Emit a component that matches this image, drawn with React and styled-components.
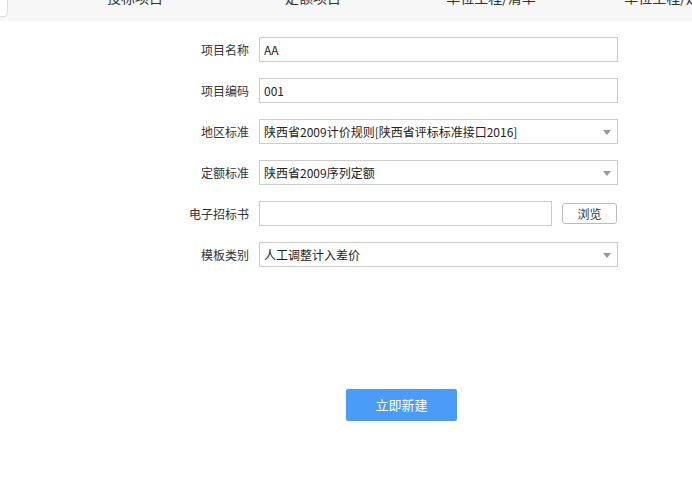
import React from 'react';
import styled, {createGlobalStyle} from 'styled-components';

const GlobalStyle = createGlobalStyle`
  html, body {
    margin: 0;
    padding: 0;
    background: #fff;
    font-family: "Noto Sans CJK SC", "Noto Sans", sans-serif;
  }
`

const tabs = ['投标项目', '定额项目', '单位工程/清单', '单位工程/定额']

const rows = [
    {label: '项目名称', value: 'AA', kind: 'input'},
    {label: '项目编码', value: '001', kind: 'input'},
    {label: '地区标准', value: '陕西省2009计价规则[陕西省评标标准接口2016]', kind: 'select'},
    {label: '定额标准', value: '陕西省2009序列定额', kind: 'select'},
    {label: '电子招标书', value: '', kind: 'file'},
    {label: '模板类别', value: '人工调整计入差价', kind: 'select'},
]

const App = () => {
    return (
        <Page>
            <GlobalStyle/>
            <TabBar>
                <Corner/>
                <Tabs>
                    {tabs.map(t => <Tab key={t}>{t}</Tab>)}
                </Tabs>
            </TabBar>
            <Form>
                {rows.map(r => (
                    <React.Fragment key={r.label}>
                        <Label>{r.label}</Label>
                        {r.kind === 'file' ? (
                            <FileRow>
                                <Field>{r.value}</Field>
                                <BrowseButton>浏览</BrowseButton>
                            </FileRow>
                        ) : (
                            <Field>
                                {r.value}
                                {r.kind === 'select' && <Arrow/>}
                            </Field>
                        )}
                    </React.Fragment>
                ))}
            </Form>
            <Footer>
                <SubmitButton>立即新建</SubmitButton>
            </Footer>
        </Page>
    );
};

export default App;

const Page = styled.div`
  width: 692px;
  height: 500px;
  overflow: hidden;
`

const TabBar = styled.div`
  position: relative;
  height: 21px;
  background: #f7f7f7;
  overflow: hidden;
`

const Corner = styled.div`
  position: absolute;
  left: -4px;
  top: -10px;
  width: 10px;
  height: 25px;
  background: #fff;
  border: 1px solid #ddd;
  border-radius: 0 0 4px 0;
`

const Tabs = styled.div`
  display: flex;
  padding-left: 46px;
  margin-top: -12px;
  white-space: nowrap;
`

const Tab = styled.div`
  flex: 0 0 178px;
  text-align: center;
  font-size: 14px;
  line-height: 18px;
  color: #333;
`

const Form = styled.div`
  display: grid;
  grid-template-columns: 80px 359px;
  column-gap: 10px;
  row-gap: 16px;
  align-items: center;
  padding: 16px 0 0 169px;
`

const Label = styled.div`
  text-align: right;
  font-size: 12px;
  color: #333;
`

const Field = styled.div`
  position: relative;
  flex: 1;
  height: 25px;
  box-sizing: border-box;
  border: 1px solid #ccc;
  padding: 0 4px;
  font-size: 12px;
  line-height: 23px;
  color: #222;
  white-space: nowrap;
`

const Arrow = styled.span`
  position: absolute;
  right: 6px;
  top: 10px;
  width: 0;
  height: 0;
  border-left: 4px solid transparent;
  border-right: 4px solid transparent;
  border-top: 5px solid #999;
`

const FileRow = styled.div`
  display: flex;
  align-items: center;
  gap: 10px;
`

const BrowseButton = styled.div`
  flex: 0 0 55px;
  height: 21px;
  box-sizing: border-box;
  border: 1px solid #bbb;
  border-radius: 3px;
  text-align: center;
  font-size: 12px;
  line-height: 19px;
  color: #333;
  margin-right: 1px;
`

const Footer = styled.div`
  padding: 122px 0 0 346px;
`

const SubmitButton = styled.div`
  width: 111px;
  height: 32px;
  background: #4a9cf8;
  border-radius: 2px;
  color: #fff;
  font-size: 13px;
  line-height: 32px;
  text-align: center;
`
